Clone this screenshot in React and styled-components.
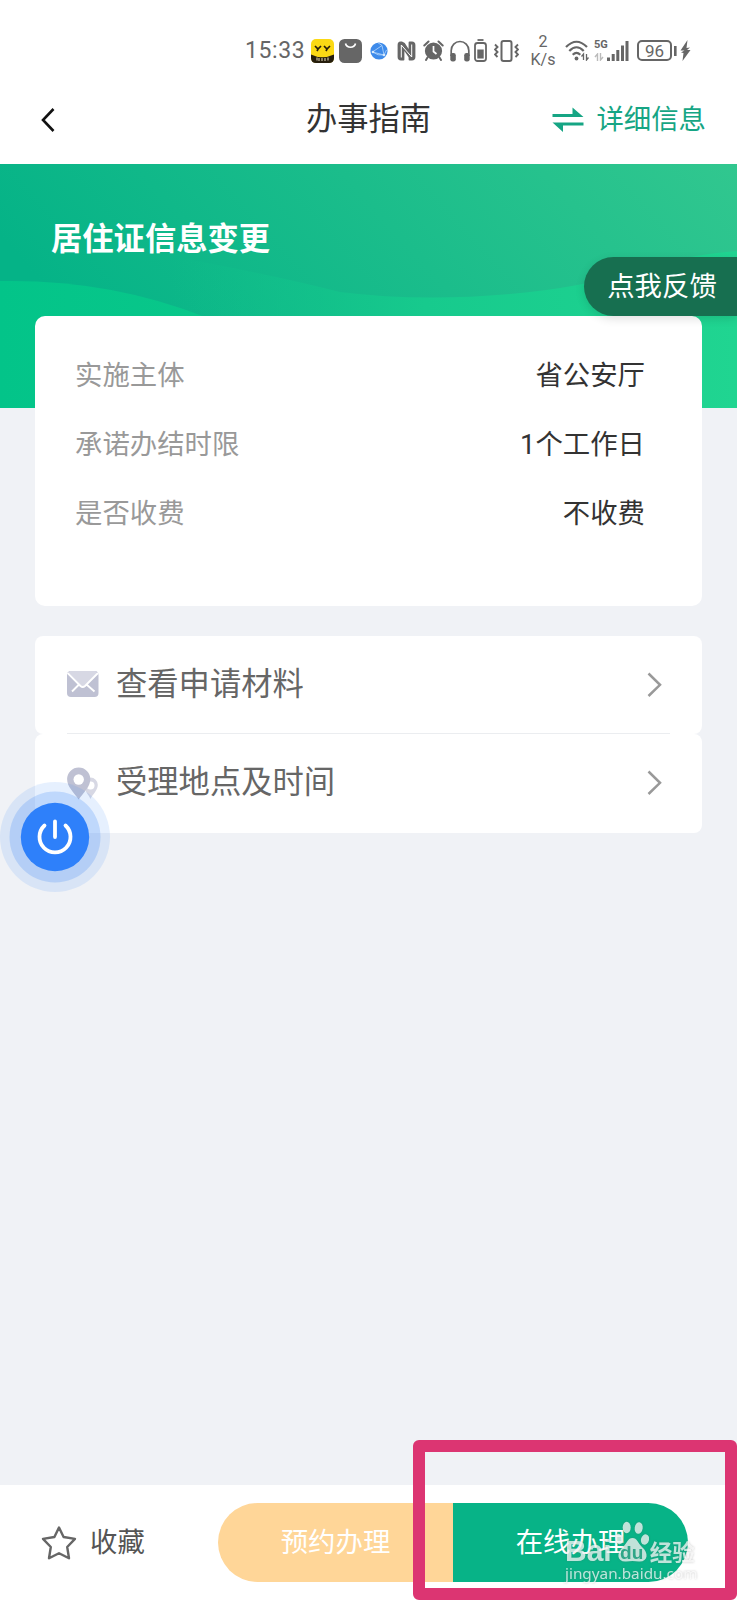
import React from 'react';
import styled, { createGlobalStyle } from 'styled-components';

const details = [
  { label: '实施主体', value: '省公安厅' },
  { label: '承诺办结时限', value: '1个工作日' },
  { label: '是否收费', value: '不收费' },
];

const App = () => {
  return (
    <Page>
      <GlobalStyle />
      <StatusBar />
      <Header>
        <BackButton aria-label='back'>
          <svg width='16' height='26' viewBox='0 0 16 26' fill='none' stroke='#111' strokeWidth='2.6'>
            <path d='M13.5 2 L3 13 L13.5 24' />
          </svg>
        </BackButton>
        <HeaderTitle>办事指南</HeaderTitle>
        <DetailLink>
          <svg width='32' height='26' viewBox='0 0 32 26' fill='#16a584'>
            <path d='M0.5 7H20.500V0.500L31.500 10H0.5z' />
            <path d='M31.500 15.500H0.5L11 25V18.500H31.500z' />
          </svg>
          详细信息
        </DetailLink>
      </Header>

      <Hero>
        <Waves />
        <HeroTitle>居住证信息变更</HeroTitle>
        <Feedback>点我反馈</Feedback>
      </Hero>

      <Main>
        <InfoCard>
          {details.map((detail) => (
            <InfoRow key={detail.label}>
              <InfoLabel>{detail.label}</InfoLabel>
              <InfoValue>{detail.value}</InfoValue>
            </InfoRow>
          ))}
        </InfoCard>

        <MenuItem divided>
          <MailIcon />
          <MenuText>查看申请材料</MenuText>
          <Chevron />
        </MenuItem>
        <MenuItem>
          <PlaceIcon />
          <MenuText>受理地点及时间</MenuText>
          <Chevron />
        </MenuItem>
      </Main>

      <PowerButton>
        <svg width='110' height='110' viewBox='0 0 110 110'>
          <circle cx='55' cy='55' r='55' fill='#2f80f7' fillOpacity='0.12' />
          <circle cx='55' cy='55' r='45.5' fill='#2f80f7' fillOpacity='0.21' />
          <circle cx='55' cy='55' r='34.2' fill='#2e80fa' />
          <g fill='none' stroke='#fff' strokeWidth='3.8' strokeLinecap='round'>
            <path d='M44.500 43.500A15.500 15.500 0 1 0 65.500 43.500' />
            <path d='M55 39.500V55' />
          </g>
        </svg>
      </PowerButton>

      <Footer>
        <Favourite>
          <svg width='36' height='36' viewBox='0 0 36 36' fill='none' stroke='#666' strokeWidth='2.4' strokeLinejoin='round'>
            <path d='M18 2.500 L22.600 12 L34 13.900 L26.200 22 L28 33.300 L18 28.300 L8 33.300 L9.800 22 L2 13.900 L13.400 12z' />
          </svg>
          收藏
        </Favourite>
        <Actions>
          <ActionButton tone='#ffd698'>预约办理</ActionButton>
          <ActionButton tone='#07b387'>在线办理</ActionButton>
        </Actions>
      </Footer>

      <Highlight />
      <Watermark>
        <WatermarkLogo>
          <span>Bai</span>
          <PawBadge>
            <Paw />
            <span>du</span>
          </PawBadge>
          <WatermarkName>经验</WatermarkName>
        </WatermarkLogo>
        <WatermarkUrl>jingyan.baidu.com</WatermarkUrl>
      </Watermark>
    </Page>
  );
};

const StatusBar = () => (
  <Status>
    <Clock>15:33</Clock>
    {/* yellow app badge */}
    <StatusIcon left={7} width='23' height='24' viewBox='0 0 23 24'>
      <rect width='23' height='24' rx='5' fill='#fbd914' />
      <path d='M0 15.500Q11 21 23 15.500V19Q23 24 18 24H5Q0 24 0 19z' fill='#251d0c' />
      <path d='M4 7l3 3 3-3M7 10l-1 2M13 7l3 3 3-3M16 10l-1 2' fill='none' stroke='#251d0c' strokeWidth='1.700' />
      <path d='M6 18.500v3M8 19v3M11 19v3M14 19v3M17 18.500v3' stroke='#e9dfc0' strokeWidth='1' />
    </StatusIcon>
    {/* shopping bag */}
    <StatusIcon left={5} width='23' height='24' viewBox='0 0 23 24'>
      <rect width='23' height='24' rx='5.500' fill='#666' />
      <path d='M6.500 4.500a5.200 5.200 0 0 0 10 0' fill='none' stroke='#fff' strokeWidth='1.700' />
    </StatusIcon>
    {/* blue globe */}
    <StatusIcon left={8} width='18' height='18' viewBox='0 0 18 18'>
      <circle cx='9' cy='9' r='8.600' fill='#3e8bea' />
      <path d='M2.500 10L12 3.500L14 13zM2.500 10Q8 14 14 13L16.500 8M12 3.500L8 .8' fill='none' stroke='#b8d8fb' strokeWidth='0.8' />
      <circle cx='3' cy='10' r='1.300' fill='#d7e9fd' />
      <circle cx='14' cy='13' r='1.300' fill='#d7e9fd' />
    </StatusIcon>
    {/* nfc */}
    <StatusIcon left={9} width='19' height='20' viewBox='0 0 19 20'>
      <path d='M5 1.500H3.500Q1.500 1.500 1.500 4V16Q1.500 18.500 4 18.500H6.500V7L12.500 16V18.500H15Q17.500 18.500 17.500 16V4Q17.500 1.500 15 1.500H12.500V11L7 2.500z' fill='#666' stroke='#666' strokeWidth='1.800' strokeLinejoin='round' />
      <path d='M4.300 16.500V4L14.700 16V3.500' fill='none' stroke='#fff' strokeWidth='1' />
    </StatusIcon>
    {/* alarm */}
    <StatusIcon left={7} width='21' height='21' viewBox='0 0 21 21'>
      <circle cx='10.500' cy='11' r='8.600' fill='#666' />
      <path d='M1.300 5.500L5.500 1.500M19.700 5.500L15.500 1.500M4.500 17.500L3 20M16.500 17.500L18 20' stroke='#666' strokeWidth='2' strokeLinecap='round' />
      <path d='M10.500 6V11.500L13.500 14' fill='none' stroke='#fff' strokeWidth='1.700' />
    </StatusIcon>
    {/* headphones */}
    <StatusIcon left={6} width='20' height='22' viewBox='0 0 20 22'>
      <path d='M1.200 16V10.500a8.800 9 0 0 1 17.600 0V16' fill='none' stroke='#666' strokeWidth='1.700' />
      <rect x='0.300' y='13' width='5.500' height='8.500' rx='2.300' fill='#666' />
      <rect x='14.200' y='13' width='5.500' height='8.500' rx='2.300' fill='#666' />
    </StatusIcon>
    {/* accessory battery */}
    <StatusIcon left={4} width='13' height='23' viewBox='0 0 13 23'>
      <path d='M3.500 1h6' stroke='#666' strokeWidth='1.800' />
      <rect x='1' y='4' width='11' height='18' rx='2.500' fill='none' stroke='#666' strokeWidth='1.800' />
      <rect x='3.300' y='10.500' width='6.400' height='9' fill='#666' />
    </StatusIcon>
    {/* vibrate */}
    <StatusIcon left={7} width='25' height='22' viewBox='0 0 25 22' fill='none' stroke='#666'>
      <rect x='7.500' y='1' width='10' height='20' rx='2' strokeWidth='2' />
      <path d='M1 4.500l2.500 2.500-2.500 2.500 2.500 2.500-2.500 2.500 2.500 2.500M24 4.500l-2.500 2.500 2.500 2.500-2.500 2.500 2.500 2.500-2.500 2.500' strokeWidth='1.900' />
    </StatusIcon>
    <NetSpeed>
      <span>2</span>
      <span>K/s</span>
    </NetSpeed>
    {/* wifi */}
    <StatusIcon left={9} width='25' height='21' viewBox='0 0 25 21'>
      <path d='M1 7Q11.500-3.500 22 7M4.300 11Q11.500 3.500 18.700 11M7.700 14.800Q11.500 11 15.300 14.800' fill='none' stroke='#666' strokeWidth='2.200' />
      <circle cx='11.500' cy='18.500' r='1.900' fill='#666' />
      <path d='M18.500 20v-6l-2 2.500M21.500 14v6l2-2.500' fill='none' stroke='#666' strokeWidth='1.300' />
    </StatusIcon>
    <Network>
      <span>5G</span>
      <svg width='10' height='8' viewBox='0 0 10 8' fill='none' stroke='#bbb' strokeWidth='1.400'>
        <path d='M3.500 8V1L1 4M6.500 0v7L9 4' />
      </svg>
    </Network>
    {/* signal bars */}
    <StatusIcon width='22' height='20' viewBox='0 0 22 20' fill='#666'>
      <rect x='0' y='16.500' width='3' height='3.500' />
      <rect x='4.700' y='13' width='3' height='7' />
      <rect x='9.300' y='9' width='3' height='11' />
      <rect x='14' y='4.500' width='3' height='15.500' />
      <rect x='18.500' y='0' width='3' height='20' />
    </StatusIcon>
    <Battery>96</Battery>
    <StatusIcon left={2} width='3' height='10' viewBox='0 0 3 10'>
      <rect width='2.600' height='10' fill='#666' />
    </StatusIcon>
    <StatusIcon left={3} width='11' height='21' viewBox='0 0 11 21'>
      <path d='M7.500 0L0.500 10.500H4.500L1 12.500L3.500 13L2.500 21L10.500 10H7L10 7.500L6.500 8z' fill='#666' />
    </StatusIcon>
  </Status>
);

const Waves = () => (
  <WaveArt viewBox='0 0 737 244' preserveAspectRatio='none'>
    <defs>
      <linearGradient id='sky' x1='0' y1='0.300' x2='1' y2='0'>
        <stop offset='0' stopColor='#05b387' />
        <stop offset='0.500' stopColor='#1bbd8b' />
        <stop offset='1' stopColor='#31c78f' />
      </linearGradient>
      <linearGradient id='hill' x1='0' y1='0' x2='1' y2='0'>
        <stop offset='0' stopColor='#03c489' />
        <stop offset='1' stopColor='#0bc88a' />
      </linearGradient>
      <linearGradient id='dune' gradientUnits='userSpaceOnUse' x1='170' y1='0' x2='737' y2='0'>
        <stop offset='0' stopColor='#0fc28a' stopOpacity='0' />
        <stop offset='0.250' stopColor='#12c48b' stopOpacity='0.650' />
        <stop offset='0.450' stopColor='#17ca8d' />
        <stop offset='1' stopColor='#20d591' />
      </linearGradient>
    </defs>
    <rect width='737' height='244' fill='url(#sky)' />
    <path d='M170 92Q270 110 340 128Q420 138 510 130Q580 124 640 106Q690 90 737 87V244H170z' fill='url(#dune)' />
    <path d='M0 117Q110 115 205 153Q240 168 270 190V244H0z' fill='url(#hill)' />
  </WaveArt>
);

const MailIcon = () => (
  <MailArt width='32' height='27' viewBox='0 0 32 27'>
    <rect width='31.500' height='26' rx='4' fill='#bfc1d3' />
    <path d='M3 0H28.500L30 2L17.500 15Q15.700 16.500 14 15L1.500 2z' fill='#d7d8e4' />
    <path d='M0.500 2L13.500 15Q15.700 17 18 15L31 2M5 20.500L12 13.500M27.500 20.500L19.500 13.500' fill='none' stroke='#fff' strokeWidth='1.900' />
  </MailArt>
);

const PlaceIcon = () => (
  <svg width='32' height='33' viewBox='0 0 32 33'>
    <path d='M23.500 10.500a7.300 7.300 0 0 1 7.300 7.300C30.800 23 26 27 23.500 32C21 27 17 23 17 17.800z' fill='#d7d8e4' />
    <circle cx='23.500' cy='18.500' r='4' fill='#fff' />
    <path d='M11.700 0.500A11.600 11.600 0 0 1 23.300 12.100C23.300 20 17 25 11.700 32.500C6.500 25 0.100 20 0.100 12.100A11.600 11.600 0 0 1 11.700 0.500z' fill='#bfc1d3' />
    <circle cx='11.700' cy='12.500' r='5.200' fill='#fff' />
  </svg>
);

const Chevron = () => (
  <svg width='15' height='26' viewBox='0 0 15 26' fill='none' stroke='#999' strokeWidth='2.500'>
    <path d='M1.500 1.500L13 12.800L1.500 24' />
  </svg>
);

const Paw = () => (
  <svg width='34' height='42' viewBox='-2 0 34 42' fill='currentColor'>
    <ellipse cx='9.700' cy='6.500' rx='4' ry='5.800' />
    <ellipse cx='21.700' cy='7' rx='4' ry='5.800' transform='rotate(8 21.700 7)' />
    <ellipse cx='2' cy='18' rx='3.500' ry='5.300' transform='rotate(-15 2 18)' />
    <ellipse cx='28' cy='18.500' rx='4' ry='5.300' transform='rotate(15 28 18.500)' />
    <path d='M15.500 17C20 17 21 22 25 26C32 32 31 41 22 40.500Q15.500 39.500 9 40.500C0 41 -1 32 6 26C10 22 11 17 15.500 17z' />
  </svg>
);

const GlobalStyle = createGlobalStyle`
  * {
    box-sizing: border-box;
  }
  body {
    margin: 0;
    font-family: Roboto, "Noto Sans CJK SC", sans-serif;
  }
  button {
    border: none;
    padding: 0;
    background: none;
    font-family: inherit;
  }
  svg {
    display: block;
    flex-shrink: 0;
  }
`;

const Page = styled.div`
  position: relative;
  display: flex;
  flex-direction: column;
  width: 737px;
  height: 1600px;
  overflow: hidden;
  background-color: #f0f2f6;
`;
const Status = styled.div`
  display: flex;
  align-items: center;
  height: 80px;
  padding: 21px 0 0 245px;
  background-color: #fff;
  color: #666;
`;
const Clock = styled.span`
  width: 59px;
  font-size: 23px;
  line-height: 24px;
  letter-spacing: 0.6px;
  white-space: nowrap;
`;
const StatusIcon = styled.svg.withConfig({ shouldForwardProp: (prop) => prop !== 'left' })`
  margin-left: ${({ left }) => left || 0}px;
`;
const NetSpeed = styled.div`
  display: flex;
  flex-direction: column;
  align-items: center;
  width: 26px;
  margin-left: 11px;
  font-size: 16px;
  line-height: 18px;
`;
const Network = styled.div`
  display: flex;
  flex-direction: column;
  align-items: flex-start;
  gap: 3px;
  width: 13px;
  margin-left: 4px;
  font-size: 11px;
  font-weight: 700;
  line-height: 10px;
`;
const Battery = styled.div`
  width: 35px;
  height: 21px;
  margin-left: 8px;
  border: 2px solid #666;
  border-radius: 5px;
  font-size: 17px;
  line-height: 18px;
  text-align: center;
`;
const Header = styled.header`
  display: grid;
  grid-template-columns: 1fr auto 1fr;
  align-items: center;
  height: 84px;
  padding: 0 31px 5px 40px;
  background-color: #fff;
`;
const BackButton = styled.button`
  width: 16px;
`;
const HeaderTitle = styled.h1`
  margin: 0;
  padding-right: 9px;
  color: #333;
  font-size: 31.3px;
  font-weight: 400;
  line-height: 40px;
`;
const DetailLink = styled.a`
  display: flex;
  align-items: center;
  justify-content: flex-end;
  gap: 12px;
  color: #16a584;
  font-size: 27.4px;
  line-height: 40px;
`;
const Hero = styled.section`
  position: relative;
  height: 244px;
  padding: 56px 0 0 51px;
`;
const WaveArt = styled.svg`
  position: absolute;
  inset: 0;
  width: 100%;
  height: 100%;
`;
const HeroTitle = styled.h2`
  position: relative;
  margin: 0;
  color: #fff;
  font-size: 31.3px;
  font-weight: 700;
  line-height: 40px;
`;
const Feedback = styled.button`
  position: absolute;
  z-index: 2;
  top: 93px;
  right: 0;
  width: 153px;
  height: 59px;
  padding: 0 0 6px 3px;
  border-radius: 30px 0 0 30px;
  background-color: #176f50;
  box-shadow: 0 3px 10px rgba(0, 0, 0, 0.12);
  color: #fff;
  font-size: 27.4px;
`;
const Main = styled.main`
  position: relative;
  flex: 1;
  margin-top: -92px;
  padding: 0 35px;
`;
const InfoCard = styled.section`
  height: 290px;
  margin-bottom: 30px;
  padding: 26px 57px 0 40px;
  border-radius: 10px;
  background-color: #fff;
`;
const InfoRow = styled.div`
  display: flex;
  justify-content: space-between;
  height: 69px;
  font-size: 27.4px;
  line-height: 69px;
`;
const InfoLabel = styled.span`
  color: #999;
`;
const InfoValue = styled.span`
  color: #333;
`;
const MenuItem = styled.div.withConfig({ shouldForwardProp: (prop) => prop !== 'divided' })`
  display: flex;
  align-items: center;
  height: 98.3px;
  padding: 0 40px 0 32px;
  border-radius: 8px;
  background: ${({ divided }) =>
    divided
      ? 'linear-gradient(#ebedf0, #ebedf0) 32px 97px / 603px 1px no-repeat, #fff'
      : '#fff'};
`;
const MailArt = styled.svg`
  margin-bottom: 2px;
`;
const MenuText = styled.span`
  flex: 1;
  margin-left: 17px;
  color: #666;
  font-size: 31.3px;
  line-height: 40px;
`;
const PowerButton = styled.div`
  position: absolute;
  z-index: 3;
  left: 0;
  top: 781.5px;
`;
const Footer = styled.footer`
  display: flex;
  align-items: center;
  justify-content: space-between;
  height: 115px;
  padding: 0 49px 0 41px;
  background-color: #fff;
`;
const Favourite = styled.div`
  display: flex;
  align-items: center;
  gap: 13px;
  color: #555;
  font-size: 27.4px;
  line-height: 40px;
`;
const Actions = styled.div`
  display: flex;
  width: 470px;
  height: 79px;
  border-radius: 40px;
  overflow: hidden;
`;
const ActionButton = styled.button.withConfig({ shouldForwardProp: (prop) => prop !== 'tone' })`
  flex: 1;
  padding-bottom: 5px;
  background-color: ${({ tone }) => tone};
  color: #fff;
  font-size: 27.4px;
`;
const Highlight = styled.div`
  position: absolute;
  left: 413px;
  right: 0;
  bottom: 0;
  height: 160px;
  border: 12px solid #dc3572;
  border-radius: 6px;
`;
const Watermark = styled.div`
  position: absolute;
  left: 565px;
  top: 1521px;
  width: 140px;
  color: rgba(255, 255, 255, 0.72);
  filter: drop-shadow(0 0 1px rgba(90, 90, 90, 0.45));
`;
const WatermarkLogo = styled.div`
  display: flex;
  align-items: flex-end;
  height: 42px;
  font-family: "Liberation Sans", sans-serif;
  font-size: 30px;
  font-weight: 700;
  line-height: 24px;
  white-space: nowrap;
`;
/* the "du" sits on the pad of the paw */
const PawBadge = styled.div`
  display: grid;
  margin-left: 3px;

  & > * {
    grid-area: 1 / 1;
  }
  & > span {
    align-self: end;
    justify-self: center;
    color: #2fa688;
    font-size: 19px;
    line-height: 20px;
  }
`;
const WatermarkName = styled.span`
  margin-left: 1px;
  font-family: "Noto Sans CJK SC", sans-serif;
  font-size: 22.5px;
`;
const WatermarkUrl = styled.div`
  font-family: "Noto Sans", sans-serif;
  font-size: 15.3px;
  line-height: 20px;
  white-space: nowrap;
`;

export default App;
